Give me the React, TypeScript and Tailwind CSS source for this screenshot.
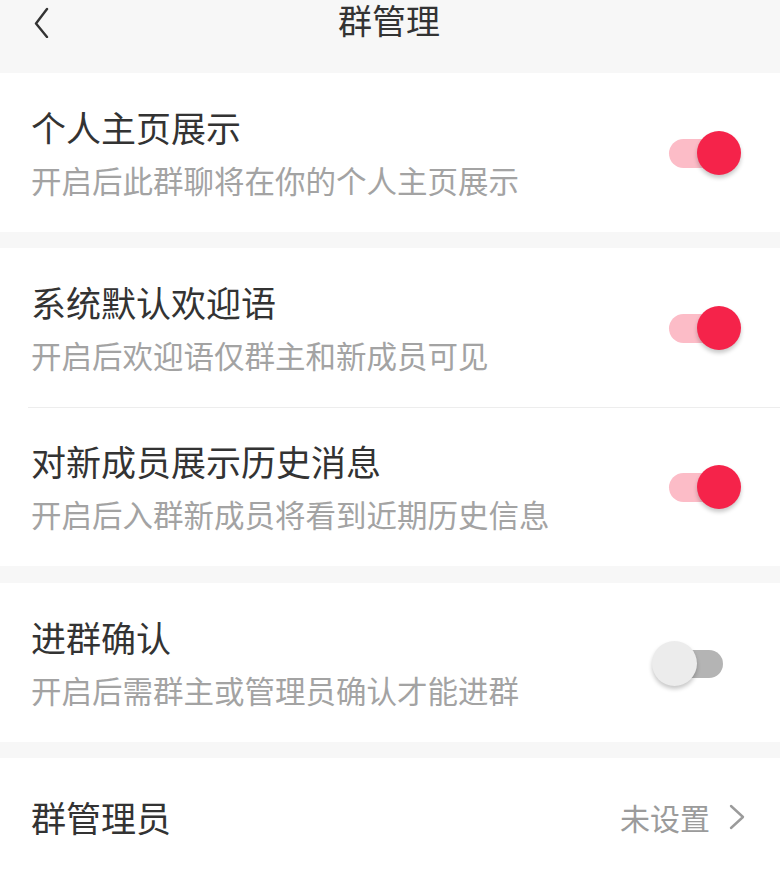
import React from "react";

const font = { fontFamily: '"Noto Sans CJK SC", "Noto Sans", sans-serif' };

function Toggle({ on }: { on: boolean }) {
  return (
    <div className="relative w-[90px] h-[48px] shrink-0">
      {on ? (
        <>
          <div className="absolute left-[17px] top-[10px] w-[64px] h-[29px] rounded-full bg-[#fcbcc7]" />
          <div className="absolute right-[1px] top-[2px] w-[44px] h-[44px] rounded-full bg-[#f5234a] shadow-[0_3px_4px_rgba(0,0,0,0.22)]" />
        </>
      ) : (
        <>
          <div className="absolute left-[8px] top-[11px] w-[63px] h-[28px] rounded-full bg-[#b4b4b4]" />
          <div className="absolute left-0 top-[2px] w-[45px] h-[45px] rounded-full bg-[#ececec] shadow-[0_3px_4px_rgba(0,0,0,0.22)]" />
        </>
      )}
    </div>
  );
}

function Row({ title, sub, on }: { title: string; sub: string; on: boolean }) {
  return (
    <div className="h-[159px] flex items-center justify-between pl-[31px] pr-[38px]">
      <div className="flex flex-col">
        <div className="text-[35px] leading-[40px] text-[#333333]">{title}</div>
        <div className="mt-[15px] text-[30.5px] leading-[36px] text-[#a3a3a3]">{sub}</div>
      </div>
      <Toggle on={on} />
    </div>
  );
}

export default function App() {
  return (
    <div className="w-[780px] h-[874px] bg-[#f7f7f7] overflow-hidden" style={font}>
      <div className="h-[73px] relative flex justify-center">
        <div className="absolute left-[30px] top-[4px]">
          <svg width="24" height="34" viewBox="0 0 24 34">
            <path d="M17 5 L6 19.5 L17 33" fill="none" stroke="#333" strokeWidth="2.4" strokeLinecap="round" strokeLinejoin="round" />
          </svg>
        </div>
        <div className="text-[34px] leading-[40px] text-[#333333] -ml-[2px]">群管理</div>
      </div>

      <div className="bg-white">
        <Row title="个人主页展示" sub="开启后此群聊将在你的个人主页展示" on={true} />
      </div>

      <div className="h-[16px]" />

      <div className="bg-white">
        <Row title="系统默认欢迎语" sub="开启后欢迎语仅群主和新成员可见" on={true} />
        <div className="ml-[28px] h-px bg-[#ededed]" />
        <div className="-mt-px">
          <Row title="对新成员展示历史消息" sub="开启后入群新成员将看到近期历史信息" on={true} />
        </div>
      </div>

      <div className="h-[17px]" />

      <div className="bg-white">
        <Row title="进群确认" sub="开启后需群主或管理员确认才能进群" on={false} />
      </div>

      <div className="h-[16px]" />

      <div className="bg-white h-[200px]">
        <div className="h-[118px] flex items-center justify-between pl-[31px] pr-[34px]">
          <div className="text-[35px] leading-[40px] text-[#333333]">群管理员</div>
          <div className="flex items-center gap-[18px]">
            <div className="text-[30px] leading-[36px] text-[#9b9b9b]">未设置</div>
            <svg width="18" height="26" viewBox="0 0 18 26">
              <path d="M3 2 L15 13 L3 24" fill="none" stroke="#9b9b9b" strokeWidth="2.4" strokeLinecap="round" strokeLinejoin="round" />
            </svg>
          </div>
        </div>
      </div>
    </div>
  );
}
